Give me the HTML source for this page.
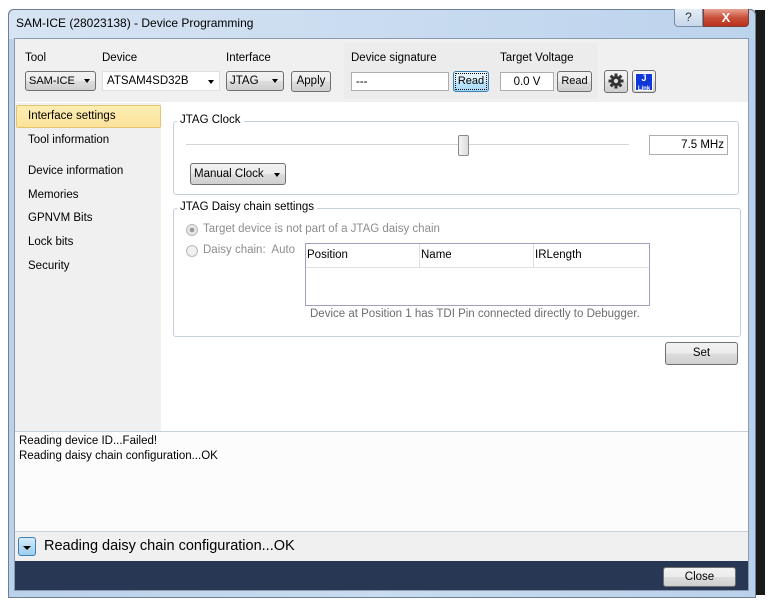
<!DOCTYPE html>
<html><head><meta charset="utf-8"><style>
*{box-sizing:border-box;margin:0;padding:0}
body{width:772px;height:604px;background:#fff;font-family:"Liberation Sans",sans-serif;font-size:11.5px;color:#000;position:relative;overflow:hidden}
.a{position:absolute}
.btn{position:absolute;border:1px solid #707070;border-radius:3px;background:linear-gradient(#f2f2f2,#ebebeb 50%,#dddddd 51%,#cfcfcf);text-align:center;font-size:11.5px;line-height:18px}
.combo{position:absolute;border:1px solid #707070;border-radius:3px;background:linear-gradient(#f2f2f2,#ebebeb 50%,#dddddd 51%,#cfcfcf);font-size:11.5px;line-height:18px;padding-left:3px}
.arrow{position:absolute;right:5px;top:7px;width:0;height:0;border-left:3.5px solid transparent;border-right:3.5px solid transparent;border-top:4px solid #000}
.tb{position:absolute;border:1px solid #abadb3;background:#fff;font-size:11.5px;line-height:18px;padding-left:4px}
.lbl{position:absolute;font-size:11.5px}
.nav{position:absolute;left:28px;font-size:11.5px}
.grp{position:absolute;border:1px solid #c5d0dc;border-radius:3px}
.gt{position:absolute;background:#fff;padding:0 3px;font-size:11.5px;top:-8px;left:3px}
.radio{position:absolute;width:12px;height:12px;border-radius:50%;border:1px solid #b8b8b8;background:#f0f0f0}
</style></head><body>
<div class="a" style="left:755px;top:10px;width:10px;height:585px;background:#1a1a1a"></div>
<div class="a" style="left:8px;top:9px;width:748px;height:589px;background:linear-gradient(90deg,#b9d1ea,#c9dcf0 50%,#b9d1ea);border:1px solid #6f7f93;border-radius:6px 6px 0 0"></div>
<div class="a" style="left:8px;top:9px;width:748px;height:30px;background:linear-gradient(90deg,#d6e4f3,#bcd3ec);border-radius:6px 6px 0 0;border:1px solid #6f7f93;border-bottom:none"></div>
<div class="a" style="left:16px;top:16px;font-size:12px">SAM-ICE (28023138) - Device Programming</div>
<div class="a" style="left:674px;top:9px;width:29px;height:18px;border:1px solid #7a8ea7;border-top:none;border-radius:0 0 0 4px;background:linear-gradient(#e4edf7,#c7d7ea);text-align:center;font-size:12px;line-height:17px;color:#333">?</div>
<div class="a" style="left:703px;top:9px;width:46px;height:18px;border:1px solid #7a3f3f;border-top:none;border-radius:0 0 4px 0;background:linear-gradient(#e8a493,#c9513b 50%,#b8301a);text-align:center;color:#fff;font-weight:bold;font-size:13px;line-height:17px">X</div>
<div class="a" style="left:14px;top:38px;width:735px;height:553px;background:#fff;border:1px solid #8a9bb0"></div>
<div class="a" style="left:15px;top:39px;width:733px;height:63px;background:#f0f0f0"></div>
<div class="a" style="left:344px;top:43px;width:254px;height:56px;background:#ececec"></div>
<div class="lbl" style="left:25px;top:52px">Tool</div>
<div class="lbl" style="left:102px;top:52px">Device</div>
<div class="lbl" style="left:226px;top:52px">Interface</div>
<div class="lbl" style="left:351px;top:52px">Device signature</div>
<div class="lbl" style="left:500px;top:52px">Target Voltage</div>
<div class="combo" style="left:25px;top:71px;width:71px;height:20px;font-size:11px">SAM-ICE<div class="arrow"></div></div>
<div class="tb" style="left:102px;top:71px;width:118px;height:20px;border-color:#e0e0e0">ATSAM4SD32B<div class="arrow" style="top:8px"></div></div>
<div class="combo" style="left:226px;top:71px;width:58px;height:20px">JTAG<div class="arrow"></div></div>
<div class="btn" style="left:291px;top:71px;width:40px;height:21px">Apply</div>
<div class="tb" style="left:351px;top:72px;width:98px;height:19px">---</div>
<div class="btn" style="left:453px;top:71px;width:36px;height:21px;border-color:#3c7fb1;background:linear-gradient(#eaf6fd,#d9f0fc 50%,#bee6fd 51%,#a7d9f5);outline:1px dotted #000;outline-offset:-3px;font-size:11px">Read</div>
<div class="tb" style="left:500px;top:72px;width:54px;height:19px;text-align:center;padding:0">0.0 V</div>
<div class="btn" style="left:557px;top:71px;width:35px;height:21px;font-size:11px">Read</div>
<div class="btn" style="left:604px;top:70px;width:24px;height:23px;padding-top:2px"><svg width="16" height="16" viewBox="0 0 16 16"><g fill="#333"><circle cx="8" cy="8" r="5"/><rect x="6.5" y="0.5" width="3" height="15"/><rect x="0.5" y="6.5" width="15" height="3"/><rect x="6.5" y="0.5" width="3" height="15" transform="rotate(45 8 8)"/><rect x="6.5" y="0.5" width="3" height="15" transform="rotate(-45 8 8)"/></g><circle cx="8" cy="8" r="2.2" fill="#ddd"/></svg></div>
<div class="btn" style="left:632px;top:70px;width:24px;height:23px;padding:2px"><div style="width:18px;height:18px;background:#1037d8;border:1px solid #fff;color:#fff;font-weight:bold;font-size:9px;line-height:9px">J<br><span style="font-size:6px">Link</span></div></div>
<div class="a" style="left:15px;top:103px;width:146px;height:328px;background:#f0f0f0"></div>
<div class="a" style="left:16px;top:105px;width:145px;height:23px;background:linear-gradient(#fdeeb3,#fbe29b);border:1px solid #e6c46e;border-radius:2px"></div>
<div class="nav" style="top:110px">Interface settings</div>
<div class="nav" style="top:134px">Tool information</div>
<div class="nav" style="top:165px">Device information</div>
<div class="nav" style="top:189px">Memories</div>
<div class="nav" style="top:212px">GPNVM Bits</div>
<div class="nav" style="top:236px">Lock bits</div>
<div class="nav" style="top:260px">Security</div>
<div class="grp" style="left:173px;top:121px;width:566px;height:74px"><div class="gt">JTAG Clock</div></div>
<div class="a" style="left:186px;top:144px;width:443px;height:2px;background:#d6d6d6;border-bottom:1px solid #fff"></div>
<div class="a" style="left:458px;top:135px;width:11px;height:21px;border:1px solid #8a8a8a;border-radius:2px;background:linear-gradient(90deg,#f4f4f4,#dcdcdc)"></div>
<div class="tb" style="left:649px;top:135px;width:79px;height:20px;text-align:right;padding-right:3px">7.5 MHz</div>
<div class="combo" style="left:190px;top:163px;width:96px;height:22px;line-height:20px">Manual Clock<div class="arrow" style="top:9px"></div></div>
<div class="grp" style="left:173px;top:208px;width:568px;height:129px"><div class="gt">JTAG Daisy chain settings</div></div>
<div class="radio" style="left:186px;top:224px;background:radial-gradient(#9a9a9a 30%,#e8e8e8 35%)"></div>
<div class="lbl" style="left:203px;top:223px;color:#8d8d8d">Target device is not part of a JTAG daisy chain</div>
<div class="radio" style="left:186px;top:245px"></div>
<div class="lbl" style="left:203px;top:244px;color:#8d8d8d">Daisy chain:&nbsp; Auto</div>
<div class="a" style="left:305px;top:243px;width:345px;height:63px;border:1px solid #a0a0c0;background:#fff"></div>
<div class="a" style="left:306px;top:244px;width:343px;height:24px;border-bottom:1px solid #e0e0e0"></div>
<div class="a" style="left:419px;top:244px;width:1px;height:24px;background:#e0e0e0"></div>
<div class="a" style="left:533px;top:244px;width:1px;height:24px;background:#e0e0e0"></div>
<div class="lbl" style="left:307px;top:249px">Position</div>
<div class="lbl" style="left:421px;top:249px">Name</div>
<div class="lbl" style="left:535px;top:249px">IRLength</div>
<div class="lbl" style="left:310px;top:308px;color:#6d6d6d">Device at Position 1 has TDI Pin connected directly to Debugger.</div>
<div class="btn" style="left:665px;top:342px;width:73px;height:23px;line-height:21px">Set</div>
<div class="a" style="left:15px;top:431px;width:733px;height:101px;background:#fcfcfc;border-top:1px solid #c8d0da;border-bottom:1px solid #c8d0da"></div>
<div class="a" style="left:19px;top:434px;font-size:11.5px;line-height:15px">Reading device ID...Failed!<br>Reading daisy chain configuration...OK</div>
<div class="a" style="left:15px;top:532px;width:733px;height:29px;background:#f0f0f0"></div>
<div class="a" style="left:18px;top:537px;width:18px;height:19px;border:1px solid #3c7fb1;border-radius:3px;background:linear-gradient(#d5ecfb,#9ccdf0)"><div style="position:absolute;left:4px;top:8px;border-left:4px solid transparent;border-right:4px solid transparent;border-top:4px solid #000"></div></div>
<div class="a" style="left:44px;top:538px;font-size:14.5px">Reading daisy chain configuration...OK</div>
<div class="a" style="left:15px;top:561px;width:733px;height:29px;background:#283754"></div>
<div class="btn" style="left:663px;top:567px;width:73px;height:20px;line-height:18px">Close</div>
</body></html>
